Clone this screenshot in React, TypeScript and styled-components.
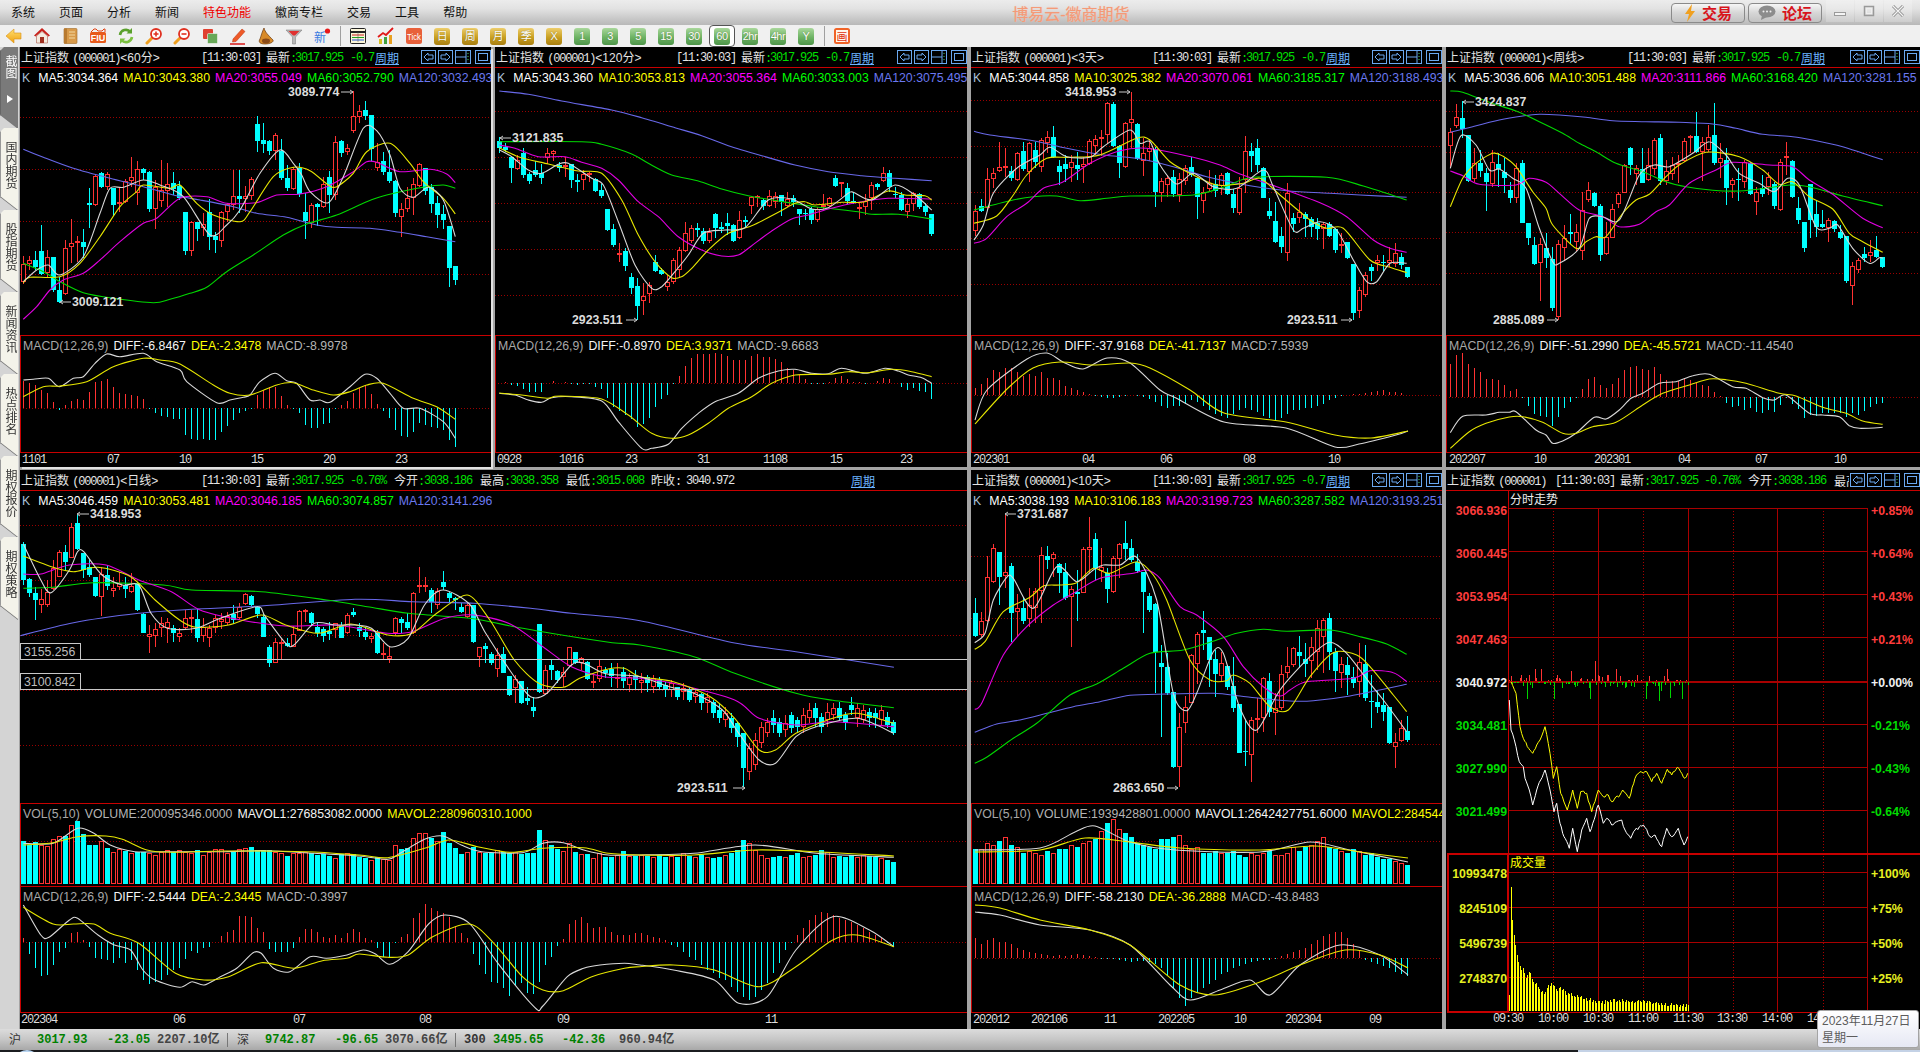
import React from "react";
import styled, { createGlobalStyle } from "styled-components";

/* ---------- chart data ---------- */
type Candle = { x: number; up: boolean; t: number; b: number; wt: number; wb: number };
type Curve = { c: string; d: string };
type Mark = { text: string; y: number; tx: number; ax1: number; ax2: number; head: "l" | "r" };

const C = { blue: "#6868e8", green: "#00d800", mag: "#e000e0", yel: "#e6e600", wht: "#d8d8d8" };
const RED = "#ff3232";
const CY = "#00ffff";
const GRID = "#9a0000";

const parseCandles = (s: string, x0: number, oy: number): Candle[] =>
  s.trim().split(/\s+/).map((tok, k) => {
    const [t, b, wt, wb] = tok.slice(1).split(",").map(Number);
    return { x: Math.round(x0 + 6 * k), up: tok[0] === "R", t: Math.round(oy + t / 3), b: Math.round(oy + b / 3), wt: Math.round(oy + wt / 3), wb: Math.round(oy + wb / 3) };
  });

const pts = (s: string, ox: number, oy: number, sx: number, sy: number) =>
  s.trim().split(/\s+/).map((p) => {
    const [x, y] = p.split(",").map(Number);
    return [ox + x / sx, oy + y / sy] as [number, number];
  });

const smooth = (p: [number, number][]) => {
  let d = `M${p[0][0].toFixed(1)} ${p[0][1].toFixed(1)}`;
  for (let i = 0; i < p.length - 1; i++) {
    const p0 = p[i - 1] || p[i];
    const p1 = p[i];
    const p2 = p[i + 1];
    const p3 = p[i + 2] || p2;
    const k = 0.14;
    d += `C${(p1[0] + (p2[0] - p0[0]) * k).toFixed(1)} ${(p1[1] + (p2[1] - p0[1]) * k).toFixed(1)} ${(p2[0] - (p3[0] - p1[0]) * k).toFixed(1)} ${(p2[1] - (p3[1] - p1[1]) * k).toFixed(1)} ${p2[0].toFixed(1)} ${p2[1].toFixed(1)}`;
  }
  return d;
};

const curves = (arr: [string, string][], ox: number, oy: number, sx = 3, sy = 3): Curve[] =>
  arr.map(([c, s]) => ({ c, d: smooth(pts(s, ox, oy, sx, sy)) }));

const rng = (seed: number) => () => {
  seed |= 0; seed = (seed + 0x6d2b79f5) | 0;
  let t = Math.imul(seed ^ (seed >>> 15), 1 | seed);
  t = (t + Math.imul(t ^ (t >>> 7), 61 | t)) ^ t;
  return ((t ^ (t >>> 14)) >>> 0) / 4294967296;
};

const tips = (s: string, oy: number) => s.trim().split(/\s+/).map((v) => oy + Number(v) / 3);

/* panel 1 */
const c1 = parseCandles(`R492,545,468,552 R481,491,468,510 C480,500,452,510 C453,522,375,525 R472,520,450,530 C471,570,470,575 C570,607,530,610 R445,583,420,585 R430,442,357,490 R424,430,407,485 C426,440,388,475 C310,315,265,385 R228,314,222,318 C218,260,215,265 R221,260,215,270 C265,315,265,347 R307,312,262,335 R242,305,238,310 R230,243,170,260 R208,278,182,315 C207,218,204,240 C216,326,212,335 R262,326,240,388 R270,304,180,320 R252,272,190,320 C250,268,215,285 C258,295,242,300 C336,452,335,465 R366,452,362,467 C366,387,365,422 R373,385,340,408 C335,410,296,450 C408,420,395,458 R336,422,332,440 R313,336,308,366 R287,315,210,330 C288,296,210,340 R287,296,258,335 R237,287,230,300 C72,122,48,155 C120,132,70,160 C124,152,120,165 R105,152,100,180 C152,235,118,240 C234,264,195,272 R207,266,200,270 C205,282,190,290 C336,364,278,416 R315,370,310,384 C313,320,310,378 R253,322,230,325 C232,285,212,338 R127,284,108,300 C122,158,120,170 R143,155,132,165 R48,92,-27,98 R34,52,15,70 C30,48,3,60 C45,148,44,182 R185,205,130,213 C184,215,155,225 C216,243,150,248 C243,338,240,352 R328,352,310,410 R295,328,262,335 R253,295,235,345 R192,257,188,262 C204,272,203,285 C262,312,252,340 C310,344,288,383 C343,360,315,388 C378,503,378,562 C498,540,498,556`, 23.33, 100);
const l1 = curves([
  [C.blue, "70,148 130,172 220,205 330,235 430,260 520,285 600,300 700,320 770,340 860,352 950,375 1010,382 1110,385 1200,397 1280,410 1366,425"],
  [C.green, "70,490 130,515 180,545 250,578 340,595 460,608 510,598 570,580 620,562 680,515 760,465 850,405 920,372 1010,345 1100,305 1160,285 1270,262 1330,255 1366,265"],
  [C.mag, "70,658 110,620 150,570 190,540 250,520 300,480 360,425 430,370 470,355 540,295 620,290 680,310 770,308 830,285 900,282 980,260 1060,215 1100,185 1130,187 1200,215 1290,208 1340,222 1366,248"],
  [C.yel, "70,548 90,532 180,530 240,490 300,410 360,320 410,275 430,255 510,265 540,255 590,310 640,345 720,365 750,335 820,230 880,202 930,212 985,255 1010,260 1060,220 1100,155 1170,130 1230,190 1270,245 1330,295 1366,342"],
  [C.wht, "70,545 110,510 145,495 180,525 250,470 300,340 330,265 370,262 430,240 480,255 550,290 630,405 680,375 720,330 780,220 840,150 880,190 905,225 930,275 985,308 1030,230 1090,85 1130,92 1170,165 1200,265 1240,292 1285,262 1330,300 1366,410"],
], 0, 100);
const h1 = tips("842 848 856 870 880 906 930 915 902 897 900 875 845 842 837 860 880 882 885 887 897 925 940 948 950 957 958 1005 1017 1020 1017 1020 1020 995 978 960 940 933 925 885 870 862 860 888 915 925 940 975 985 985 972 970 928 915 903 878 865 855 882 912 932 955 990 1008 1010 995 970 975 980 985 990 1020 1042", 100);
const m1 = curves([
  [C.wht, "70,840 100,838 145,835 178,860 220,835 250,830 285,790 320,762 360,770 430,760 470,785 540,810 560,845 650,908 690,900 730,892 750,885 780,845 825,820 860,842 890,850 930,900 960,900 990,907 1050,860 1095,823 1130,835 1170,880 1210,925 1260,925 1330,965 1366,1015"],
  [C.yel, "70,890 130,860 180,858 260,845 340,800 430,775 480,780 540,792 640,855 690,880 750,885 830,855 880,848 940,870 1000,885 1050,875 1100,855 1150,850 1240,895 1310,920 1366,958"],
], 0, 100);

/* panel 2 */
const c2 = parseCandles(`C168,188,155,205 C185,196,175,200 C217,248,215,293 R225,252,210,255 C205,270,190,280 C267,288,260,296 C256,270,228,275 C265,278,238,298 R205,218,190,238 R197,207,195,228 C240,250,232,262 R240,246,215,275 C238,285,236,308 C286,290,268,322 R267,285,255,315 R263,270,260,290 C283,318,280,320 C316,332,298,340 C372,436,372,438 C432,480,418,485 R503,506,475,530 C497,543,490,558 C575,608,565,628 C603,663,580,705 R632,648,595,690 R600,628,592,655 C532,557,510,562 C556,567,550,570 R590,605,570,618 R525,592,520,596 R495,555,485,580 R445,497,412,500 R430,468,420,475 C430,434,414,455 C438,467,430,478 R442,468,430,475 C388,428,385,458 C427,432,410,445 C414,423,385,450 C420,468,418,472 R406,460,378,462 C406,412,392,425 R335,362,332,388 R332,338,330,365 C346,362,342,375 R334,362,315,365 R332,352,320,370 C330,352,330,392 R343,362,320,365 C340,350,330,365 C373,387,372,420 C385,388,372,405 C372,404,365,418 R372,404,365,410 R360,367,328,372 R340,362,335,365 C280,303,270,305 R292,298,290,335 C310,348,295,358 C348,352,320,358 R367,373,350,402 R347,365,328,390 R300,340,290,375 C297,305,295,315 R265,287,245,290 C265,305,255,320 C327,331,305,340 C330,375,322,378 R356,380,340,400 R325,358,320,378 C328,366,325,372 C364,380,355,394 C387,446,387,452`, 499.33, 85);
const l2 = curves([
  [C.blue, "13,18 100,28 200,48 350,75 440,98 540,128 620,152 700,182 800,212 900,240 1000,260 1100,272 1200,280 1310,287"],
  [C.green, "13,170 260,170 320,178 410,207 460,235 530,270 610,288 680,312 760,332 850,348 960,365 1090,380 1130,388 1210,388 1310,402"],
  [C.mag, "13,180 60,190 130,215 210,215 260,232 320,250 370,285 430,350 490,395 550,455 620,495 680,513 730,510 770,482 830,438 890,402 940,390 1000,372 1090,352 1180,340 1310,342"],
  [C.yel, "13,188 70,215 160,237 250,258 320,265 380,345 430,450 480,530 530,578 560,575 590,550 640,495 700,445 770,422 850,382 900,355 930,350 960,360 1040,352 1110,350 1180,318 1230,330 1290,332 1310,345"],
  [C.wht, "13,195 50,215 100,255 140,265 190,238 220,235 290,280 325,300 370,410 420,540 470,610 500,605 540,560 580,510 625,445 690,435 750,428 820,345 890,342 950,372 1000,368 1060,325 1075,322 1130,345 1200,300 1260,330 1310,375"],
], 495, 85);
const h2 = tips("893 892 900 902 912 920 920 920 893 888 893 892 895 900 895 895 907 912 940 965 978 990 1003 1025 1018 1000 965 942 930 898 873 843 820 808 808 806 805 808 812 826 824 824 813 808 816 816 822 830 848 855 870 882 895 895 895 890 878 874 882 890 892 897 893 888 880 882 893 905 914 910 918 922 942", 85);
const m2 = curves([
  [C.wht, "13,925 60,930 100,945 140,952 170,938 230,935 320,948 370,1010 440,1090 470,1090 520,1078 560,1030 610,985 660,950 730,925 790,880 850,858 900,853 950,865 1000,866 1040,850 1110,865 1170,850 1210,858 1240,870 1280,878 1310,895"],
  [C.yel, "13,924 80,930 155,940 180,934 220,934 320,942 400,990 470,1045 530,1060 580,1050 640,1015 700,970 770,935 830,895 900,870 1000,868 1060,860 1120,863 1190,853 1250,860 1310,875"],
], 495, 85);

/* panel 3 */
const c3 = parseCandles(`R514,572,495,588 C498,512,478,515 R418,503,385,510 R400,416,385,445 R380,392,305,395 R378,382,325,410 C394,414,378,422 R340,420,335,422 C334,388,305,392 R310,395,305,425 C330,365,305,385 R300,380,295,395 R290,308,272,340 C292,352,258,355 C378,396,360,435 C372,388,345,425 R366,385,345,425 C375,388,335,420 R372,380,350,428 R302,372,298,375 R298,318,285,345 R292,296,270,348 R190,285,185,312 C192,318,186,322 C317,368,315,415 R250,380,245,384 R238,250,155,325 C252,358,250,360 R340,362,295,408 R325,335,298,362 C328,456,322,500 R424,458,415,485 R415,436,405,470 C410,462,390,472 R418,464,400,485 R385,424,375,435 C380,405,350,412 C415,472,412,536 R455,482,440,518 R428,446,390,452 C432,452,405,472 R405,438,400,465 C400,462,395,465 C462,505,448,520 R445,518,412,525 R332,420,288,458 C334,348,308,395 C324,375,298,395 C385,473,380,475 C514,527,475,538 C543,606,485,608 C588,622,560,638 R458,640,430,662 C534,552,520,575 R515,534,488,548 C522,538,515,590 C538,562,530,590 C550,566,535,600 R552,568,545,628 C553,588,545,590 C568,630,565,638 R612,618,580,638 C606,655,605,658 C672,820,672,840 R750,812,740,835 R705,766,695,772 C680,692,672,722 R660,668,645,692 C665,670,645,695 R660,668,622,680 R640,672,610,680 C650,676,640,688 C682,710,680,715`, 974.67, 40);
const l3 = curves([
  [C.blue, "42,274 90,285 220,302 320,325 430,345 530,355 640,380 740,410 870,437 980,452 1110,460 1200,465 1340,472"],
  [C.green, "42,510 150,482 220,470 290,468 360,482 440,475 510,468 700,465 800,438 880,412 1100,412 1210,438 1340,480"],
  [C.mag, "42,610 80,595 140,530 200,490 250,445 310,425 390,370 480,332 560,325 700,352 780,375 840,402 950,440 1080,488 1160,530 1240,600 1290,625 1340,637"],
  [C.yel, "42,550 110,528 160,465 200,405 260,355 330,352 420,345 530,295 570,300 630,365 700,405 770,435 850,430 900,415 960,465 1050,540 1100,565 1150,565 1230,660 1290,682 1340,698"],
  [C.wht, "42,600 70,555 100,460 170,385 240,345 270,322 320,350 390,352 430,320 510,270 540,310 570,305 600,375 650,432 700,400 760,440 830,445 910,390 940,440 1000,570 1030,565 1080,545 1130,570 1180,660 1220,725 1250,725 1290,670 1340,670"],
], 960, 40);
const h3v = [8,12,18,26,24,28,28,24,20,22,20,24,18,18,16,10,8,6,4,2,0,-1,-2,-2,-1,0,1,0,-1,-3,-6,-10,-12,-10,-10,-8,-4,-6,-10,-14,-18,-20,-22,-18,-14,-12,-14,-16,-20,-22,-24,-22,-18,-14,-14,-12,-12,-10,-8,-4,-2,0,1,2,2,3,4,5,6,4,4,3];
const h3 = h3v.map((v) => 395.5 - v);
const m3 = curves([
  [C.wht, "975,420 987,390 1027,359 1047,353 1063,362 1083,369 1107,358 1130,363 1160,390 1176,398 1224,422 1286,428 1335,447 1359,444 1396,435 1408,431"],
  [C.yel, "975,424 1007,389 1033,368 1060,362 1093,365 1130,363 1150,368 1190,390 1224,413 1286,422 1335,435 1371,438 1408,431"],
], 0, 0, 1, 1);

/* panel 4 */
const c4 = parseCandles(`R140,182,130,250 R95,123,58,130 C100,132,48,160 C150,287,150,290 R235,282,190,290 C235,258,195,275 C265,290,250,378 R230,298,195,305 C238,252,205,305 C262,278,220,325 C316,340,290,355 R248,340,235,355 C235,413,225,415 C415,458,415,480 C480,538,455,540 R478,534,460,648 C488,518,445,548 C522,668,485,678 R478,695,465,705 R458,488,420,528 C442,446,388,478 R442,472,418,498 R376,497,320,525 R314,345,290,350 C324,362,322,365 C364,510,358,528 R457,507,410,510 R373,458,358,460 R328,358,320,370 R240,323,238,325 C188,240,185,270 R248,268,240,300 C252,293,190,295 R240,285,188,288 R165,253,160,270 C160,287,148,300 R258,288,225,300 R240,268,215,285 R233,240,210,295 R167,228,160,230 R153,160,150,205 C153,200,80,205 R172,200,155,288 R157,195,120,200 C150,235,55,240 R220,235,175,278 C225,308,188,360 R286,300,280,340 C283,285,250,348 R232,290,225,310 C235,326,232,330 R320,350,305,390 C310,328,270,335 R275,305,262,330 C298,362,290,372 R230,375,222,378 R213,215,172,270 C228,335,225,338 C370,404,335,416 C412,490,410,500 C298,404,296,458 C388,425,345,455 C417,425,375,430 R404,428,400,470 C407,432,405,440 C440,458,420,462 C453,588,453,595 R544,602,530,660 R525,554,520,565 C508,520,485,532 R500,512,465,532 C496,516,453,520 C517,546,517,550`, 1450.33, 85);
const l4 = curves([
  [C.blue, "13,142 80,125 160,105 230,93 280,88 340,90 420,97 500,107 600,110 700,112 800,117 870,130 950,148 1040,155 1100,165 1190,185 1250,205 1310,224"],
  [C.green, "13,18 50,22 130,52 210,78 280,110 350,145 400,175 450,200 510,235 590,260 660,290 720,305 800,316 880,318 960,310 1030,300 1090,305 1190,333 1310,362"],
  [C.mag, "13,258 50,272 100,298 210,300 250,280 300,292 340,325 400,375 470,395 520,425 580,418 630,380 670,360 730,295 810,255 860,232 970,240 1040,245 1090,285 1160,328 1250,400 1310,428"],
  [C.yel, "13,365 50,280 90,235 140,205 170,213 210,245 260,320 300,370 320,420 390,490 420,470 450,455 480,455 530,385 570,345 610,328 660,275 700,240 780,202 880,215 950,255 1000,298 1040,290 1090,335 1160,372 1210,445 1250,470 1310,502"],
  [C.wht, "13,250 45,152 90,180 130,255 160,252 200,280 240,310 280,430 320,530 340,535 400,490 430,400 470,395 520,405 580,270 625,240 670,245 740,205 790,170 840,210 880,265 940,295 985,320 1025,280 1060,300 1110,425 1150,430 1175,420 1220,490 1270,535 1300,518 1310,520"],
], 1446, 85);
const h4 = tips("838 810 805 838 850 862 882 882 886 900 918 912 938 962 988 992 995 1022 995 970 950 938 912 882 876 900 908 896 880 855 846 843 853 855 847 868 885 888 888 878 885 895 900 903 920 934 954 965 962 975 968 980 983 975 980 960 938 958 972 998 990 992 985 985 985 985 995 985 990 978 965 958 955", 85);
const m4 = curves([
  [C.wht, "13,1043 50,994 120,990 160,982 190,982 210,980 270,1035 300,1050 320,1075 350,1068 390,1045 445,997 480,1002 520,975 555,940 590,925 640,895 690,890 740,872 790,868 860,905 900,910 950,938 985,945 1020,930 1090,985 1130,990 1180,995 1210,1022 1240,1030 1310,1027"],
  [C.yel, "13,1090 70,1040 120,1015 190,996 230,995 290,1012 350,1045 390,1045 440,1025 510,1012 590,960 650,925 730,900 790,882 840,884 900,895 1000,925 1050,933 1130,967 1200,985 1250,1008 1310,1018"],
], 1446, 85);

/* big daily panel */
const cB = parseCandles(`C222,330,215,345 C327,370,325,380 C370,390,350,450 R388,404,358,430 R365,404,330,410 R295,358,270,360 R246,320,240,322 C246,277,225,300 R172,263,160,265 C160,237,135,240 C248,300,248,325 C292,315,270,320 C322,378,320,380 R313,380,290,438 C314,348,285,360 R355,362,320,380 R340,350,305,360 C345,357,322,385 R348,365,310,370 C340,420,337,422 C432,488,430,490 R492,500,465,548 R476,497,460,530 R458,474,440,500 R455,475,445,520 C473,488,465,515 R488,502,475,515 R445,475,420,478 R440,445,420,490 C448,503,418,515 R470,497,445,515 R473,505,465,530 R445,473,435,490 R448,455,430,478 R438,458,425,465 C432,450,405,462 R410,445,400,450 R372,403,368,405 C378,405,376,410 C412,432,408,445 C442,500,432,502 C532,578,525,590 R515,578,505,580 R515,523,505,570 C520,528,505,530 R493,530,468,532 R423,482,420,484 R421,427,418,455 C430,460,425,465 C470,490,455,500 C478,498,470,515 C482,492,455,510 R460,480,458,505 C465,503,455,505 R435,490,430,492 C427,435,415,440 C470,483,460,500 C485,500,470,510 R498,507,490,520 C490,550,480,552 R550,556,520,568 R557,568,528,578 R443,490,440,495 C448,458,440,490 C455,475,430,480 R370,490,365,492 R345,352,292,368 R345,350,322,365 C360,395,355,430 R362,405,355,418 C336,350,303,360 C368,385,365,395 C385,390,380,420 C410,425,400,430 R405,440,398,445 C405,515,405,518 R532,562,530,592 C528,538,518,580 C552,578,545,585 R555,598,535,622 C552,608,530,610 C618,674,618,678 R628,655,615,700 C634,698,632,702 C684,692,650,705 C711,722,682,740 C462,665,462,670 R600,672,585,675 C585,600,570,630 C603,630,600,640 R606,620,590,650 R532,588,530,592 C546,578,545,582 R565,578,560,600 C575,627,572,630 R632,635,610,655 R588,628,570,635 C600,610,590,625 C598,618,580,650 R620,625,580,655 C605,632,590,655 R620,645,610,665 C618,630,600,660 R630,640,610,670 C622,640,615,665 R625,650,615,670 C630,650,620,660 C645,660,635,680 R640,660,630,680 C650,680,650,690 R655,665,640,690 C660,690,650,695 R665,680,655,700 C672,700,668,720 R680,700,670,730 C695,730,690,745 C720,745,700,760 R730,750,710,770 C745,775,730,790 C760,800,755,830 C790,895,790,952 R835,905,820,930 R810,885,790,900 R770,820,755,835 R755,790,745,800 C745,765,720,790 C755,790,745,800 R760,780,735,800 C735,775,725,790 C750,770,740,790 R735,770,715,790 R720,745,700,760 C715,745,700,770 C740,770,730,790 R725,750,700,770 R715,735,700,750 C715,745,695,750 C735,760,725,780 C705,720,680,735 R715,745,700,770 R720,750,705,760 C725,745,715,770 C730,745,715,775 R720,750,705,765 C740,765,725,775 C755,790,750,795`, 23.3, 470);
const lB = curves([
  [C.blue, "50,497 180,458 340,430 470,418 640,408 870,388 1010,395 1160,400 1300,415 1400,430 1568,452 1800,519 1950,545 2190,592"],
  [C.green, "57,355 130,352 230,338 400,345 470,360 640,365 800,390 900,410 1000,430 1150,445 1260,470 1350,490 1500,518 1568,525 1700,560 1800,610 1950,670 2040,691 2190,713"],
  [C.mag, "57,312 100,312 170,285 260,285 340,330 420,365 490,420 590,450 700,468 820,465 900,480 950,490 1010,485 1090,445 1160,435 1250,462 1330,530 1400,590 1480,620 1568,625 1650,640 1800,690 1860,745 1950,765 2040,755 2190,770"],
  [C.yel, "57,258 130,292 180,305 240,292 320,320 380,390 440,450 480,472 560,465 640,435 700,465 780,490 860,462 950,495 1010,490 1070,430 1145,375 1200,450 1260,570 1320,640 1380,652 1420,625 1490,597 1530,595 1568,620 1650,635 1740,680 1800,745 1860,840 1900,840 1950,790 2040,745 2100,730 2190,760"],
  [C.wht, "57,222 100,330 125,368 170,300 190,245 205,245 250,315 300,345 340,345 370,430 410,475 480,475 540,445 630,410 650,440 700,520 720,525 770,460 820,465 870,465 910,475 955,530 1000,505 1040,405 1085,360 1150,402 1190,490 1260,620 1300,680 1340,670 1400,585 1430,580 1480,610 1520,615 1568,620 1640,650 1700,670 1770,720 1810,790 1860,870 1900,880 1950,800 2000,770 2100,745 2190,790"],
], 0, 470, 2.45, 3);
const vB = tips("122 135 127 135 138 118 108 108 75 63 102 135 135 122 143 155 148 153 158 157 157 158 164 155 150 155 150 156 158 150 164 155 148 147 158 152 148 145 140 150 150 150 155 158 167 160 160 155 158 165 163 168 175 162 160 163 170 175 180 172 178 180 135 146 145 115 100 100 115 122 96 130 145 162 155 142 155 158 158 150 155 158 155 162 158 158 90 120 135 148 152 130 155 162 162 175 160 172 170 165 153 168 168 165 168 172 165 170 168 172 160 168 170 165 172 175 170 165 160 150 120 130 150 165 175 172 168 170 165 160 170 168 165 150 155 170 168 172 165 170 165 168 172 175 180 186", 800);
const volB = curves([
  [C.wht, "57,130 130,130 190,85 230,100 270,135 330,155 400,155 550,155 650,152 770,160 880,168 950,178 980,160 1040,118 1085,108 1130,135 1180,155 1280,158 1330,130 1380,128 1430,150 1490,165 1568,165 1700,160 1850,135 2000,160 2190,172"],
  [C.yel, "57,135 130,128 190,110 260,108 300,118 360,150 420,157 550,153 750,155 880,165 950,173 1040,145 1100,120 1170,140 1250,157 1330,145 1430,143 1490,160 1568,165 1700,165 1850,150 2000,155 2190,168"],
], 0, 800, 2.45, 3);
const hB = tips("415 462 505 527 525 495 455 445 398 397 420 440 475 478 480 490 475 488 480 510 540 553 545 540 525 510 503 478 452 458 445 440 425 407 395 390 347 347 350 385 395 448 455 455 457 443 410 387 387 395 410 415 405 415 398 387 397 413 420 445 470 470 427 410 402 355 338 312 325 332 340 350 378 400 415 462 495 522 545 550 565 587 555 550 580 582 545 495 470 437 418 373 360 350 370 385 380 380 395 405 405 405 400 400 405 410 415 420 435 440 455 470 480 495 510 520 535 540 560 575 590 600 590 570 550 520 490 450 430 405 385 360 345 335 340 345 355 360 365 375 385 395 405 415 430 440", 800);
const mB = curves([
  [C.wht, "57,315 100,405 120,412 170,360 190,355 240,405 280,435 320,450 350,510 380,540 440,562 470,545 500,555 540,530 580,505 620,458 640,460 670,505 710,515 760,470 800,475 850,465 890,450 920,462 955,493 1000,455 1050,372 1090,345 1150,370 1220,490 1310,622 1330,618 1390,530 1430,505 1470,495 1530,490 1568,495 1650,510 1750,540 1810,610 1880,590 1950,450 2040,350 2130,390 2190,440"],
  [C.yel, "57,322 130,372 180,372 230,372 270,400 340,430 430,520 500,540 560,530 640,488 720,505 790,482 850,475 880,462 950,472 1000,465 1060,410 1150,372 1210,430 1280,530 1330,570 1380,572 1450,530 1530,505 1568,500 1650,495 1750,510 1860,560 1950,500 2040,420 2100,405 2190,440"],
], 0, 800, 2.45, 3);

/* panel 5 */
const c5 = parseCandles(`C460,528,415,530 R482,525,455,530 R352,482,288,485 R265,365,252,368 C276,352,275,435 R335,347,165,385 C318,458,310,545 R443,455,402,530 C445,484,412,492 R435,478,385,500 R392,445,385,490 R286,392,262,490 C288,300,258,328 R283,298,275,350 C313,338,310,400 C335,414,310,420 R388,412,378,560 C395,403,330,482 R268,400,262,400 R262,270,170,340 C237,325,220,360 R322,332,265,365 C340,388,325,430 R295,396,288,398 R253,296,250,355 C250,266,183,300 C265,300,238,305 C305,332,282,340 C335,395,335,518 C408,450,400,455 C432,575,430,700 C608,620,555,832 C620,700,580,705 C695,922,695,925 R800,920,760,982 R740,790,708,820 R585,728,583,730 R522,613,515,672 C510,518,452,570 C532,600,532,680 C596,642,570,710 R610,648,575,665 C618,680,615,690 C678,745,590,755 C733,878,733,880 C873,875,780,918 R780,885,770,965 R775,778,715,820 R655,775,652,815 C663,755,640,770 R745,760,700,825 R642,745,615,750 R618,640,560,655 R565,615,560,620 C576,587,528,625 C598,612,550,650 R560,603,530,655 R505,575,480,630 R480,530,475,640 C474,575,460,630 C575,634,565,695 R612,638,590,685 C615,645,590,705 C650,668,620,685 R607,665,548,712 C612,714,555,722 C723,725,645,805 C727,740,690,760 C736,755,700,782 C742,850,742,852 R845,860,818,925 R805,842,780,845 C814,840,768,845`, 974.67, 460);
const l5 = curves([
  [C.blue, "44,817 110,792 180,780 260,760 340,740 420,725 510,706 620,702 760,700 840,708 900,715 990,723 1060,722 1170,708 1340,673"],
  [C.green, "44,910 80,892 160,835 230,790 330,705 410,672 490,625 570,580 670,570 770,540 830,520 910,508 980,514 1110,510 1200,530 1280,552 1340,583"],
  [C.mag, "44,748 65,730 130,585 200,500 280,435 340,400 420,355 520,340 560,330 600,355 660,440 710,465 790,530 850,620 910,680 960,708 990,690 1040,665 1180,655 1230,632 1300,638 1340,665"],
  [C.yel, "44,568 75,545 130,455 210,412 250,378 300,375 350,368 400,325 450,340 530,305 580,345 620,420 690,600 750,660 800,662 820,645 870,670 930,740 985,750 1050,650 1120,578 1190,585 1230,620 1300,705 1340,755"],
  [C.wht, "44,548 75,520 100,420 140,352 160,355 220,445 290,320 350,365 400,330 430,315 480,315 530,292 590,420 640,700 680,752 710,700 760,575 790,580 840,745 890,810 960,690 1050,590 1110,547 1160,580 1230,670 1270,720 1340,815"],
], 960, 460);
const v5 = [34,34,40,38,42,46,38,36,30,32,30,28,32,30,34,34,38,36,40,42,44,52,60,64,54,50,46,40,38,36,34,44,44,46,48,38,34,36,30,30,32,30,30,32,28,26,30,28,30,32,28,28,30,36,32,36,38,42,46,36,34,32,30,34,32,28,30,26,24,24,22,20,18].map((h) => 883 - h);
const vol5 = curves([
  [C.wht, "975,850 1040,848 1075,832 1095,826 1130,842 1175,850 1260,852 1310,842 1350,850 1408,862"],
  [C.yel, "975,852 1040,850 1085,838 1130,842 1180,848 1260,850 1315,846 1360,852 1408,858"],
], 0, 0, 1, 1);
const h5v = [20,14,18,20,16,16,14,10,8,6,5,4,3,2,3,2,3,4,3,2,1,0,-1,-1,-2,-3,-4,-3,-3,-4,-6,-10,-18,-30,-40,-48,-40,-34,-30,-26,-22,-16,-14,-10,-8,-6,-4,-3,-2,-2,-1,2,4,6,8,10,14,18,22,24,26,26,20,14,8,-2,-4,-6,-8,-10,-14,-16,-18];
const h5 = h5v.map((v) => 958 - v);
const m5 = curves([
  [C.wht, "975,912 1000,915 1040,925 1090,930 1130,945 1170,985 1190,1000 1220,990 1250,980 1270,995 1300,965 1340,945 1380,955 1408,975"],
  [C.yel, "975,905 1000,908 1040,920 1090,930 1130,945 1180,985 1215,995 1260,982 1300,965 1345,950 1380,955 1408,968"],
], 0, 0, 1, 1);

/* time-share panel */
const jag = (s: string, ox: number, oy: number, seed: number) => {
  const base = pts(s, ox, oy, 3, 3);
  const r = rng(seed);
  const out: [number, number][] = [];
  for (let i = 0; i < base.length - 1; i++) {
    const [a, b] = [base[i], base[i + 1]];
    const n = Math.max(1, Math.round((b[0] - a[0]) / 1.5));
    for (let j = 0; j < n; j++) {
      const f = j / n;
      out.push([a[0] + (b[0] - a[0]) * f, a[1] + (b[1] - a[1]) * f + (j ? (r() - 0.5) * 3 : 0)]);
    }
  }
  out.push(base[base.length - 1]);
  return out.map((p, i) => `${i ? "L" : "M"}${p[0].toFixed(1)} ${p[1].toFixed(1)}`).join("");
};
const tWhite = jag("208,720 213,810 228,860 238,905 250,920 255,955 268,990 278,1035 290,990 302,960 315,930 330,990 342,1055 350,1030 360,1090 372,1130 388,1165 398,1105 412,1175 425,1110 440,1075 450,1115 475,1035 490,1090 500,1075 515,1095 530,1085 545,1080 555,1110 572,1135 585,1110 610,1095 630,1130 645,1125 665,1160 680,1105 695,1130 715,1105 732,1155 743,1130", 1440, 460, 7);
const tYellow = jag("213,665 228,700 240,800 250,835 262,860 278,880 290,855 300,840 315,800 330,880 340,955 350,920 362,1000 382,1050 398,990 412,1045 422,995 440,1000 455,1055 475,990 490,1010 505,1005 515,1025 540,1005 548,990 568,1015 585,955 600,935 620,935 635,965 650,940 665,970 682,928 695,945 712,922 735,955 743,940", 1440, 460, 11);

const flow = (() => {
  const r = rng(21);
  const fixed: Record<number, number> = { 51: 625 - 662, 64: 625 - 662, 124: 632 - 662, 170: 603 - 662, 213: 625 - 662, 274: 612 - 662, 314: 625 - 662, 37: 712 - 662, 89: 712 - 662, 163: 713 - 662, 273: 713 - 662, 301: 718 - 662, 321: 710 - 662, 345: 712 - 662 };
  const res: { x: number; d: number }[] = [];
  for (let i = 0; i < 120; i++) {
    const id = Object.keys(fixed).find((k) => Math.round(Number(k) / 3) === i);
    const v = id ? fixed[Number(id)] : (r() < 0.5 ? -1 : 1) * r() * r() * (i < 50 ? 34 : 30);
    res.push({ x: 1509 + i * 1.5, d: v / 3 });
  }
  return res;
})();

const volEnv = pts("208,393 212,105 216,240 222,300 232,350 240,380 250,385 258,410 265,383 275,410 285,425 295,440 310,455 330,425 345,440 365,440 380,455 410,460 430,470 470,480 550,475 620,480 700,490 745,490", 1440, 840, 3, 3);
const tVol = (() => {
  const r = rng(5);
  const res: { x: number; y: number }[] = [];
  for (let x = 1509; x <= 1688; x += 1.5) {
    let k = 0;
    while (k < volEnv.length - 2 && volEnv[k + 1][0] < x) k++;
    const [a, b] = [volEnv[k], volEnv[k + 1]];
    const f = Math.min(1, (x - a[0]) / (b[0] - a[0]));
    res.push({ x, y: a[1] + (b[1] - a[1]) * f + (x > 1515 ? r() * 4 : 0) });
  }
  return res;
})();

/* ---------- styled parts ---------- */
const FONT = `"Liberation Sans", "Noto Sans CJK SC", sans-serif`;
const MONO = `"Liberation Mono", "Noto Sans CJK SC", monospace`;

const Global = createGlobalStyle`
  html, body { margin: 0; padding: 0; background: #d4d4d4; overflow: hidden; }
  body { font-family: ${FONT}; font-size: 12px; }
  * { box-sizing: border-box; }
`;

const Screen = styled.div`
  position: relative; width: 1920px; height: 1052px; overflow: hidden;
  display: flex; flex-direction: column; background: #d4d4d4;
`;

const MenuBar = styled.div`
  height: 25px; flex: none; display: flex; align-items: center; padding-left: 11px;
  background: linear-gradient(#ececec, #e2e2e2 35%, #b8b8b8);
`;
const MenuItem = styled.span<{ $hot?: boolean }>`
  margin-right: 24px; color: ${(p) => (p.$hot ? "#f00000" : "#111")}; font-size: 12px; line-height: 14px; white-space: nowrap;
`;
const BrandTitle = styled.span`
  margin-left: 521px; font-size: 16px; color: #f49a78; white-space: nowrap; text-shadow: 0 0 1px #f7b9a0;
`;
const RightCluster = styled.div`
  margin-left: auto; display: flex; align-items: center; height: 100%; padding-right: 8px;
`;
const TopBtn = styled.div`
  width: 74px; height: 20px; margin-right: 3px; border: 1px solid #8a8a8a; border-radius: 4px;
  background: linear-gradient(#f6f6f6, #d6d6d6 50%, #c2c2c2);
  display: flex; align-items: center; justify-content: center; gap: 6px;
  font-size: 15px; font-weight: 700; color: #d8141c; white-space: nowrap;
`;
const WinBtn = styled.div`
  width: 28px; height: 22px; margin-left: 1px; display: flex; align-items: center; justify-content: center; align-self: flex-start;
  background: rgba(255,255,255,.22);
`;

const ToolBar = styled.div`
  height: 22px; flex: none; display: flex; align-items: center; background: #f0f0f0;
`;
const ToolSlot = styled.div<{ $sel?: boolean }>`
  width: 28px; height: 22px; flex: none; display: flex; align-items: center; justify-content: center;
  ${(p) => p.$sel && "background:#fff; border:1px solid #555; border-radius:4px; margin:0 1px; width:26px;"}
`;
const ToolSep = styled.div`
  width: 8px; height: 20px; flex: none; display: flex; justify-content: center;
  &::after { content: ""; width: 1px; height: 100%; background: #a0a0a0; }
`;
const PeriodBtn = styled.div<{ $gold?: boolean }>`
  width: 16px; height: 17px; border-radius: 3px; display: flex; align-items: center; justify-content: center;
  background: ${(p) => (p.$gold ? "linear-gradient(#edcd6c,#c9a021 55%,#a87e10)" : "linear-gradient(#a9d79b,#6db364 55%,#4d9448)")};
  color: #fff; font-size: 11px; line-height: 11px; letter-spacing: -0.4px; text-shadow: 0 0 1px rgba(60,60,0,.6); white-space: nowrap;
`;

const Workspace = styled.div`
  flex: none; height: 982px; display: flex;
`;
const SideTabs = styled.div`
  width: 19px; flex: none; display: flex; flex-direction: column; filter: drop-shadow(0 1px 0 #777);
`;
const SideTab = styled.div<{ $h: number; $sel?: boolean }>`
  width: 18px; height: ${(p) => p.$h}px; flex: none; display: flex; flex-direction: column; align-items: center;
  padding-top: ${(p) => (p.$sel ? 8 : 13)}px; gap: 14px;
  clip-path: polygon(0 4px, 4px 0, 100% 0, 100% 100%, 0 calc(100% - 14px));
  background: ${(p) => (p.$sel ? "#7a7a7a" : "#f4f3ea")};
  color: ${(p) => (p.$sel ? "#fff" : "#333")};
  border-left: 1px solid ${(p) => (p.$sel ? "#666" : "#999")};
`;
const TabText = styled.span`
  writing-mode: vertical-rl; text-orientation: upright; font-size: 12px; line-height: 13px; letter-spacing: 0.3px;
`;

const ChartGrid = styled.div`
  flex: 1; display: grid; padding-left: 1px; column-gap: 4px; row-gap: 3px;
  grid-template-columns: 471px 472px 471px 474px; grid-template-rows: 420px 559px;
  background: #a4a4a4;
`;
const Panel = styled.section<{ $span?: number; $active?: boolean }>`
  position: relative; background: #000; overflow: hidden; display: flex; flex-direction: column; min-width: 0;
  ${(p) => p.$span && `grid-column: span ${p.$span};`}
  ${(p) => p.$active && "box-shadow: 2px 2px 0 #e2e2e2;"}
`;
const PanelHead = styled.header`
  position: relative; height: 21px; flex: none; display: flex; align-items: center; padding-left: 1px;
  border-bottom: 1px solid #c80000; color: #e4e4e4; white-space: nowrap;
`;
const Seg = styled.span<{ $w: number; $c?: string }>`
  flex: none; width: ${(p) => p.$w}px; color: ${(p) => p.$c || "#e4e4e4"}; font-size: 12px; overflow: visible; white-space: nowrap;
`;
const MonoTxt = styled.span<{ $c?: string }>`
  font-family: ${MONO}; font-size: 12px; letter-spacing: -1.2px; color: ${(p) => p.$c || "inherit"};
`;
const PeriodLink = styled.a`
  flex: none; width: 24px; color: #6cb4ff; text-decoration: underline; font-size: 12px;
`;
const HeadBtns = styled.div`
  position: absolute; right: 0; top: 3px; height: 14px; display: flex; gap: 2px; background: #000; padding-left: 1px;
`;
const HeadBtn = styled.svg<{ $gapL?: boolean }>`
  display: block; ${(p) => p.$gapL && "margin-left:2px;"}
`;

const MainPane = styled.div<{ $h: number }>`
  position: relative; flex: none; height: ${(p) => p.$h}px; overflow: hidden;
`;
const SubPane = styled.div<{ $h: number }>`
  position: relative; flex: none; height: ${(p) => p.$h}px; overflow: hidden;
  border-top: 1px solid #c80000; border-left: 1px solid #c80000;
`;
const Layer = styled.svg`
  position: absolute; left: 0; top: 0; width: 100%; height: 100%; display: block;
`;
const Legend = styled.div<{ $gap: number }>`
  position: relative; z-index: 1; height: 20px; display: flex; align-items: center; gap: ${(p) => p.$gap}px; padding-left: 2px;
  white-space: nowrap; font-size: 12.3px; overflow: hidden;
`;
const LegendItem = styled.span<{ $c: string }>`
  flex: none; color: ${(p) => p.$c};
  &:last-child { flex: 0 1 auto; min-width: 0; overflow: hidden; }
`;
const KTag = styled(LegendItem)`
  margin-right: 3px;
`;
const AxisRow = styled.div`
  position: relative; flex: 1; border-top: 1px solid #c80000; color: #ddd;
`;
const AxisTick = styled.span<{ $x: number }>`
  position: absolute; left: ${(p) => p.$x}px; top: 0; line-height: 14px; font-family: ${MONO}; font-size: 12px; letter-spacing: -1.2px; white-space: nowrap;
`;
const MarkText = styled.text`
  font-family: ${FONT}; font-size: 12.3px; font-weight: 700; fill: #dcdcdc;
`;
const BoxText = styled.text`
  font-family: ${FONT}; font-size: 12.3px; fill: #bdbdbd;
`;

const TimeSection = styled.div<{ $h: number }>`
  position: relative; z-index: 1; height: ${(p) => p.$h}px; flex: none; display: grid;
  grid-template-columns: 61px 1fr 49px; padding-top: 0;
`;
const TimeAxis = styled.div<{ $left?: boolean; $pitch: number }>`
  display: flex; flex-direction: column; padding-top: 13px; text-align: ${(p) => (p.$left ? "right" : "left")};
  font-size: 12.3px; font-weight: 700; line-height: 14px; white-space: nowrap;
  & > span { height: ${(p) => p.$pitch}px; flex: none; }
`;
const AxisValue = styled.span<{ $c: string }>`
  color: ${(p) => p.$c};
`;
const PlotTitle = styled.span<{ $c: string }>`
  color: ${(p) => p.$c}; font-size: 12px; line-height: 18px; padding-left: 3px; align-self: start; height: 18px;
`;
const TimeTicks = styled.div`
  position: relative; z-index: 1; flex: 1; color: #ddd;
`;

const StatusBar = styled.div`
  height: 21px; flex: none; display: flex; align-items: center; padding-left: 9px; white-space: nowrap;
  background: linear-gradient(#dcdcdc, #c6c6c6 50%, #a8a8a8);
`;
const StatusCell = styled.span<{ $w: number; $c: string }>`
  flex: none; width: ${(p) => p.$w}px; height: 14px; line-height: 14px; color: ${(p) => p.$c}; font-family: ${MONO}; font-size: 12px; font-weight: 700;
`;
const StatusCjk = styled.span<{ $w: number }>`
  flex: none; width: ${(p) => p.$w}px; height: 14px; line-height: 14px; color: #333; font-size: 12px;
`;
const StatusSep = styled.span<{ $w: number }>`
  flex: none; width: ${(p) => p.$w}px; height: 14px; display: flex;
  &::before { content: ""; width: 1px; height: 100%; background: #777; }
`;
const TaskSliver = styled.div`
  flex: 1; position: relative; overflow: hidden;
  background: linear-gradient(90deg, #1b1d20 0, #1b1d20 1578px, #c4d2e6 1578px, #c4d2e6 100%);
  &::before { content: ""; position: absolute; left: 14px; top: 0; width: 26px; height: 26px; border-radius: 50%; background: #b8d4f0; }
`;
const DateTip = styled.div`
  position: absolute; left: 1817px; top: 1010px; width: 102px; height: 38px; z-index: 3; padding: 2px 4px;
  background: linear-gradient(#ffffff, #e6e8f4); border: 1px solid #a4a4a4; border-radius: 3px; color: #5c5c5c;
  font-size: 12px; line-height: 17px; white-space: nowrap;
`;

/* ---------- chart drawing ---------- */
const Candles = ({ data }: { data: Candle[] }) => (
  <g shapeRendering="crispEdges">
    {data.map((c, i) =>
      c.up ? (
        <g key={i}>
          <rect x={c.x} y={c.wt} width={1} height={Math.max(0, c.t - c.wt)} fill={RED} />
          <rect x={c.x} y={c.b} width={1} height={Math.max(0, c.wb - c.b)} fill={RED} />
          <rect x={c.x - 1.5} y={c.t + 0.5} width={4} height={Math.max(1, c.b - c.t - 1)} fill="#000" stroke={RED} />
        </g>
      ) : (
        <g key={i} fill={CY}>
          <rect x={c.x} y={c.wt} width={1} height={Math.max(1, c.wb - c.wt)} />
          <rect x={c.x - 2} y={c.t} width={5} height={Math.max(1, c.b - c.t)} />
        </g>
      )
    )}
  </g>
);
const Grid = ({ ys, x, w }: { ys: number[]; x: number; w: number }) => (
  <g shapeRendering="crispEdges">
    {ys.map((y) => <line key={y} x1={x} x2={x + w} y1={Math.round(y) + 0.5} y2={Math.round(y) + 0.5} stroke={GRID} strokeDasharray="1 2" />)}
  </g>
);
const Lines = ({ data, w = 1.1 }: { data: Curve[]; w?: number }) => (
  <g fill="none">{data.map((l, i) => <path key={i} d={l.d} stroke={l.c} strokeWidth={w} />)}</g>
);
const Marker = ({ m }: { m: Mark }) => (
  <g>
    <MarkText x={m.tx} y={m.y + 4}>{m.text}</MarkText>
    <path
      d={m.head === "r"
        ? `M${m.ax1} ${m.y}H${m.ax2}M${m.ax2 - 3} ${m.y - 2}L${m.ax2} ${m.y}L${m.ax2 - 3} ${m.y + 2}`
        : `M${m.ax2} ${m.y}H${m.ax1}M${m.ax1 + 3} ${m.y - 2}L${m.ax1} ${m.y}L${m.ax1 + 3} ${m.y + 2}`}
      stroke="#c8c8c8" strokeWidth={1} fill="none"
    />
  </g>
);
const Hist = ({ data, candles, zero }: { data: number[]; candles: Candle[]; zero: number }) => (
  <g shapeRendering="crispEdges">
    {data.map((y, i) => {
      const c = candles[i];
      if (!c) return null;
      return <rect key={i} x={c.x} width={1} y={Math.min(y, zero)} height={Math.max(0.5, Math.abs(y - zero))} fill={y < zero ? RED : CY} />;
    })}
  </g>
);
const VolBars = ({ data, candles, base }: { data: number[]; candles: Candle[]; base: number }) => (
  <g shapeRendering="crispEdges">
    {data.map((y, i) => {
      const c = candles[i];
      if (!c) return null;
      return c.up ? (
        <rect key={i} x={c.x - 1.5} y={Math.round(y) + 0.5} width={4} height={base - Math.round(y)} fill="#000" stroke={RED} />
      ) : (
        <rect key={i} x={c.x - 2} y={Math.round(y)} width={5} height={base - Math.round(y) + 1} fill={CY} />
      );
    })}
  </g>
);

/* ---------- header bits ---------- */
const HeaderButtons = () => (
  <HeadBtns>
    <HeadBtn width="15" height="14" viewBox="0 0 15 14" fill="none" stroke="#6aa8f0">
      <rect x=".5" y=".5" width="14" height="13" />
      <path d="M3 7l4-4v2h5v4H7v2z" />
    </HeadBtn>
    <HeadBtn width="15" height="14" viewBox="0 0 15 14" fill="none" stroke="#6aa8f0">
      <rect x=".5" y=".5" width="14" height="13" />
      <path d="M12 7L8 3v2H3v4h5v2z" />
    </HeadBtn>
    <HeadBtn width="16" height="14" viewBox="0 0 16 14" fill="none" stroke="#6aa8f0">
      <rect x=".5" y=".5" width="15" height="13" />
      <path d="M1 7h10M11 1v12" />
      <path d="M13 3v1M13 6v1M13 9v1" stroke="#3fd060" />
    </HeadBtn>
    <HeadBtn $gapL width="16" height="14" viewBox="0 0 16 14" fill="none" stroke="#6aa8f0">
      <rect x=".5" y=".5" width="15" height="13" />
      <rect x="3.5" y="3.5" width="9" height="7" />
    </HeadBtn>
  </HeadBtns>
);

const NameSeg = ({ suffix, w }: { suffix: string; w: number }) => (
  <Seg $w={w}>
    上证指数 <MonoTxt>(000001)</MonoTxt>{suffix}
  </Seg>
);

const TimeSeg = () => <Seg $w={65}><MonoTxt>[11:30:03]</MonoTxt></Seg>;
const G = "#00e000";

const StdHeader = ({ suffix }: { suffix: string }) => (
  <PanelHead>
    <NameSeg suffix={suffix} w={180} />
    <TimeSeg />
    <Seg $w={29}>最新<MonoTxt $c={G}>:</MonoTxt></Seg>
    <Seg $w={55}><MonoTxt $c={G}>3017.925</MonoTxt></Seg>
    <Seg $w={25}><MonoTxt $c={G}>-0.7</MonoTxt></Seg>
    <PeriodLink>周期</PeriodLink>
    <HeaderButtons />
  </PanelHead>
);

/* ---------- legends ---------- */
const MaLegend = ({ v }: { v: string[] }) => (
  <Legend $gap={5}>
    <KTag $c="#a9c0d8">K</KTag>
    <LegendItem $c="#fff">MA5:{v[0]}</LegendItem>
    <LegendItem $c="#ffff00">MA10:{v[1]}</LegendItem>
    <LegendItem $c="#ff00ff">MA20:{v[2]}</LegendItem>
    <LegendItem $c="#00ff00">MA60:{v[3]}</LegendItem>
    <LegendItem $c="#6a78f0">MA120:{v[4]}</LegendItem>
  </Legend>
);
const MacdLegend = ({ v }: { v: string[] }) => (
  <Legend $gap={5}>
    <LegendItem $c="#a8a8a8">MACD(12,26,9)</LegendItem>
    <LegendItem $c="#f4f4f4">DIFF:{v[0]}</LegendItem>
    <LegendItem $c="#ffff00">DEA:{v[1]}</LegendItem>
    <LegendItem $c="#b4b4b4">MACD:{v[2]}</LegendItem>
  </Legend>
);
const VolLegend = ({ v }: { v: string[] }) => (
  <Legend $gap={5}>
    <LegendItem $c="#a8a8a8">VOL(5,10)</LegendItem>
    <LegendItem $c="#b4b4b4">VOLUME:{v[0]}</LegendItem>
    <LegendItem $c="#f4f4f4">MAVOL1:{v[1]}</LegendItem>
    <LegendItem $c="#ffff00">MAVOL2:{v[2]}</LegendItem>
  </Legend>
);

/* ---------- chart panels ---------- */
type Spec = {
  suffix: string; x: number; w: number; candles: Candle[]; lines: Curve[]; grid: number[]; marks: Mark[];
  ma: string[]; macd: string[]; hist: number[]; zero: number; mlines: Curve[]; ticks: [string, number][]; active?: boolean;
};
const SmallPanel = ({ s }: { s: Spec }) => (
  <Panel $active={s.active}>
    <StdHeader suffix={s.suffix} />
    <MainPane $h={267}>
      <Layer viewBox={`${s.x} 68 ${s.w} 267`} preserveAspectRatio="none">
        <Grid ys={s.grid} x={s.x} w={s.w} />
        <Candles data={s.candles} />
        <Lines data={s.lines} />
        {s.marks.map((m) => <Marker key={m.text} m={m} />)}
      </Layer>
      <MaLegend v={s.ma} />
    </MainPane>
    <SubPane $h={117}>
      <Layer viewBox={`${s.x + 1} 336 ${s.w - 1} 116`} preserveAspectRatio="none">
        <Grid ys={[s.zero]} x={s.x} w={s.w} />
        <Hist data={s.hist} candles={s.candles} zero={s.zero} />
        <Lines data={s.mlines} />
      </Layer>
      <MacdLegend v={s.macd} />
    </SubPane>
    <AxisRow>
      {s.ticks.map(([t, x]) => <AxisTick key={t + x} $x={x - s.x}>{t}</AxisTick>)}
    </AxisRow>
  </Panel>
);

const P1: Spec = {
  active: true,
  suffix: "<60分>", x: 20, w: 471, candles: c1, lines: l1, grid: [117, 169, 221, 274],
  marks: [
    { text: "3009.121", y: 302, tx: 72, ax1: 60, ax2: 71, head: "l" },
    { text: "3089.774", y: 92, tx: 288, ax1: 341, ax2: 353, head: "r" },
  ],
  ma: ["3034.364", "3043.380", "3055.049", "3052.790", "3032.493"], macd: ["-6.8467", "-2.3478", "-8.9978"],
  hist: h1, zero: 408, mlines: m1,
  ticks: [["1101", 22], ["07", 107], ["10", 179], ["15", 251], ["20", 323], ["23", 395]],
};
const P2: Spec = {
  suffix: "<120分>", x: 495, w: 472, candles: c2, lines: l2, grid: [111, 157, 203, 249, 295],
  marks: [
    { text: "3121.835", y: 138, tx: 512, ax1: 500, ax2: 511, head: "l" },
    { text: "2923.511", y: 320, tx: 572, ax1: 626, ax2: 637, head: "r" },
  ],
  ma: ["3043.360", "3053.813", "3055.364", "3033.003", "3075.495"], macd: ["-0.8970", "3.9371", "-9.6683"],
  hist: h2, zero: 383, mlines: m2,
  ticks: [["0928", 497], ["1016", 559], ["23", 625], ["31", 697], ["1108", 763], ["15", 830], ["23", 900]],
};
const P3: Spec = {
  suffix: "<3天>", x: 971, w: 471, candles: c3, lines: l3, grid: [100, 146, 192, 238, 284],
  marks: [
    { text: "3418.953", y: 92, tx: 1065, ax1: 1119, ax2: 1130, head: "r" },
    { text: "2923.511", y: 320, tx: 1287, ax1: 1341, ax2: 1352, head: "r" },
  ],
  ma: ["3044.858", "3025.382", "3070.061", "3185.317", "3188.493"], macd: ["-37.9168", "-41.7137", "7.5939"],
  hist: h3, zero: 395, mlines: m3,
  ticks: [["202301", 973], ["04", 1082], ["06", 1160], ["08", 1243], ["10", 1328]],
};
const P4: Spec = {
  suffix: "<周线>", x: 1446, w: 474, candles: c4, lines: l4, grid: [111, 152, 192, 232, 273],
  marks: [
    { text: "3424.837", y: 102, tx: 1475, ax1: 1463, ax2: 1474, head: "l" },
    { text: "2885.089", y: 320, tx: 1493, ax1: 1547, ax2: 1558, head: "r" },
  ],
  ma: ["3036.606", "3051.488", "3111.866", "3168.420", "3281.155"], macd: ["-51.2990", "-45.5721", "-11.4540"],
  hist: h4, zero: 397, mlines: m4,
  ticks: [["202207", 1449], ["10", 1534], ["202301", 1594], ["04", 1678], ["07", 1755], ["10", 1834]],
};

const BigHeader = () => (
  <PanelHead>
    <NameSeg suffix="<日线>" w={180} />
    <TimeSeg />
    <Seg $w={29}>最新<MonoTxt $c={G}>:</MonoTxt></Seg>
    <Seg $w={55}><MonoTxt $c={G}>3017.925</MonoTxt></Seg>
    <Seg $w={44}><MonoTxt $c={G}>-0.76%</MonoTxt></Seg>
    <Seg $w={30}>今开<MonoTxt $c={G}>:</MonoTxt></Seg>
    <Seg $w={56}><MonoTxt $c={G}>3038.186</MonoTxt></Seg>
    <Seg $w={30}>最高<MonoTxt $c={G}>:</MonoTxt></Seg>
    <Seg $w={56}><MonoTxt $c={G}>3038.358</MonoTxt></Seg>
    <Seg $w={30}>最低<MonoTxt $c={G}>:</MonoTxt></Seg>
    <Seg $w={55}><MonoTxt $c={G}>3015.008</MonoTxt></Seg>
    <Seg $w={35}>昨收<MonoTxt>:</MonoTxt></Seg>
    <Seg $w={165}><MonoTxt>3040.972</MonoTxt></Seg>
    <PeriodLink>周期</PeriodLink>
  </PanelHead>
);

const BigPanel = () => (
  <Panel $span={2}>
    <BigHeader />
    <MainPane $h={312}>
      <Layer viewBox="20 491 947 312" preserveAspectRatio="none">
        <Grid ys={[525, 580, 635, 690, 745]} x={20} w={947} />
        <Candles data={cB} />
        <Lines data={lB} />
        <g shapeRendering="crispEdges">
          <line x1={20} x2={967} y1={659.5} y2={659.5} stroke="#c8c8c8" />
          <line x1={20} x2={967} y1={689.5} y2={689.5} stroke="#c8c8c8" />
          <rect x={20.5} y={643.5} width={60} height={16} fill="#000" stroke="#c8c8c8" />
          <rect x={20.5} y={673.5} width={60} height={16} fill="#000" stroke="#c8c8c8" />
        </g>
        <BoxText x={24} y={656}>3155.256</BoxText>
        <BoxText x={24} y={686}>3100.842</BoxText>
        <Marker m={{ text: "3418.953", y: 514, tx: 90, ax1: 77, ax2: 89, head: "l" }} />
        <Marker m={{ text: "2923.511", y: 788, tx: 677, ax1: 733, ax2: 745, head: "r" }} />
      </Layer>
      <MaLegend v={["3046.459", "3053.481", "3046.185", "3074.857", "3141.296"]} />
    </MainPane>
    <SubPane $h={83}>
      <Layer viewBox="21 804 946 82" preserveAspectRatio="none">
        <Grid ys={[841]} x={20} w={947} />
        <VolBars data={vB} candles={cB} base={883} />
        <Lines data={volB} />
      </Layer>
      <VolLegend v={["200095346.0000", "276853082.0000", "280960310.1000"]} />
    </SubPane>
    <SubPane $h={126}>
      <Layer viewBox="21 887 946 125" preserveAspectRatio="none">
        <Grid ys={[942]} x={20} w={947} />
        <Hist data={hB} candles={cB} zero={942} />
        <Lines data={mB} />
      </Layer>
      <MacdLegend v={["-2.5444", "-2.3445", "-0.3997"]} />
    </SubPane>
    <AxisRow>
      {([["202304", 21], ["06", 173], ["07", 293], ["08", 419], ["09", 557], ["11", 765]] as [string, number][]).map(([t, x]) => (
        <AxisTick key={t} $x={x - 20}>{t}</AxisTick>
      ))}
    </AxisRow>
  </Panel>
);

const TallPanel = () => (
  <Panel>
    <StdHeader suffix="<10天>" />
    <MainPane $h={312}>
      <Layer viewBox="971 491 471 312" preserveAspectRatio="none">
        <Grid ys={[556, 618, 681, 744]} x={971} w={471} />
        <Candles data={c5} />
        <Lines data={l5} />
        <Marker m={{ text: "3731.687", y: 514, tx: 1017, ax1: 1005, ax2: 1016, head: "l" }} />
        <Marker m={{ text: "2863.650", y: 788, tx: 1113, ax1: 1167, ax2: 1178, head: "r" }} />
      </Layer>
      <MaLegend v={["3038.193", "3106.183", "3199.723", "3287.582", "3193.251"]} />
    </MainPane>
    <SubPane $h={83}>
      <Layer viewBox="972 804 470 82" preserveAspectRatio="none">
        <Grid ys={[841]} x={971} w={471} />
        <VolBars data={v5} candles={c5} base={883} />
        <Lines data={vol5} />
      </Layer>
      <VolLegend v={["1939428801.0000", "2642427751.6000", "2845440000.0000"]} />
    </SubPane>
    <SubPane $h={126}>
      <Layer viewBox="972 887 470 125" preserveAspectRatio="none">
        <Grid ys={[958]} x={971} w={471} />
        <Hist data={h5} candles={c5} zero={958} />
        <Lines data={m5} />
      </Layer>
      <MacdLegend v={["-58.2130", "-36.2888", "-43.8483"]} />
    </SubPane>
    <AxisRow>
      {([["202012", 973], ["202106", 1031], ["11", 1104], ["202205", 1158], ["10", 1234], ["202304", 1285], ["09", 1369]] as [string, number][]).map(([t, x]) => (
        <AxisTick key={t} $x={x - 971}>{t}</AxisTick>
      ))}
    </AxisRow>
  </Panel>
);

const AR = "#a80000";
const TimeLayer = () => (
  <Layer viewBox="1446 491 474 538" preserveAspectRatio="none">
    <g shapeRendering="crispEdges" stroke={AR} fill="none">
      {[508, 551, 594, 637, 724, 767, 810].map((y) => <line key={y} x1={1508} x2={1867} y1={y + 0.5} y2={y + 0.5} />)}
      {[872, 907, 942, 977].map((y) => <line key={y} x1={1508} x2={1867} y1={y + 0.5} y2={y + 0.5} />)}
      <line x1={1508} x2={1867} y1={681.5} y2={681.5} strokeWidth={2} />
      {[1598, 1688, 1777, 1867].map((x) => <line key={x} x1={x + 0.5} x2={x + 0.5} y1={508} y2={1012} />)}
      {[1553, 1643, 1733, 1823].map((x) => <line key={x} x1={x + 0.5} x2={x + 0.5} y1={508} y2={1012} strokeDasharray="1 2" />)}
      <line x1={1508.5} x2={1508.5} y1={491} y2={1012} stroke="#c80000" />
      <line x1={1448} x2={1920} y1={854} y2={854} stroke="#c80000" strokeWidth={2} />
      <rect x={1448} y={854} width={60} height={158} stroke="#c80000" strokeWidth={2} />
      <line x1={1448} x2={1867} y1={1012.5} y2={1012.5} stroke="#c80000" />
    </g>
    <g shapeRendering="crispEdges">
      {flow.map((b, i) => (
        <rect key={i} x={b.x} width={1} y={b.d < 0 ? 681 + b.d : 682} height={Math.max(0.5, Math.abs(b.d))} fill={b.d < 0 ? RED : "#00d400"} />
      ))}
      {tVol.map((b, i) => <rect key={i} x={b.x} width={1} y={b.y} height={1011 - b.y} fill="#ffff00" />)}
    </g>
    <path d={tYellow} stroke="#ffff00" fill="none" strokeWidth={1} />
    <path d={tWhite} stroke="#fff" fill="none" strokeWidth={1} />
  </Layer>
);

const LEFT_MAIN: [string, string][] = [["3066.936", "#ff3c3c"], ["3060.445", "#ff3c3c"], ["3053.954", "#ff3c3c"], ["3047.463", "#ff3c3c"], ["3040.972", "#f0f0f0"], ["3034.481", "#00dc00"], ["3027.990", "#00dc00"], ["3021.499", "#00dc00"]];
const RIGHT_MAIN: [string, string][] = [["+0.85%", "#ff3c3c"], ["+0.64%", "#ff3c3c"], ["+0.43%", "#ff3c3c"], ["+0.21%", "#ff3c3c"], ["+0.00%", "#f0f0f0"], ["-0.21%", "#00dc00"], ["-0.43%", "#00dc00"], ["-0.64%", "#00dc00"]];

const TimeBodyWrap = styled.div`
  position: relative; flex: 1; display: flex; flex-direction: column;
`;
const TimeBody = () => (
  <TimeBodyWrap>
    <TimeLayer />
    <TimeSection $h={363}>
      <TimeAxis $left $pitch={43}>
        {LEFT_MAIN.map(([t, c]) => <AxisValue key={t} $c={c}>{t}</AxisValue>)}
      </TimeAxis>
      <PlotTitle $c="#eeeeee">分时走势</PlotTitle>
      <TimeAxis $pitch={43}>
        {RIGHT_MAIN.map(([t, c]) => <AxisValue key={t} $c={c}>{t}</AxisValue>)}
      </TimeAxis>
    </TimeSection>
    <TimeSection $h={158}>
      <TimeAxis $left $pitch={35}>
        {["10993478", "8245109", "5496739", "2748370"].map((t) => <AxisValue key={t} $c="#e6f020">{t}</AxisValue>)}
      </TimeAxis>
      <PlotTitle $c="#ffff00">成交量</PlotTitle>
      <TimeAxis $pitch={35}>
        {["+100%", "+75%", "+50%", "+25%"].map((t) => <AxisValue key={t} $c="#e6f020">{t}</AxisValue>)}
      </TimeAxis>
    </TimeSection>
    <TimeTicks>
      {([["09:30", 1493], ["10:00", 1538], ["10:30", 1583], ["11:00", 1628], ["11:30", 1673], ["13:30", 1717], ["14:00", 1762], ["14:30", 1807]] as [string, number][]).map(([t, x]) => (
        <AxisTick key={t} $x={x - 1446}>{t}</AxisTick>
      ))}
    </TimeTicks>
  </TimeBodyWrap>
);

const TimeShare = () => (
  <Panel>
    <PanelHead>
      <NameSeg suffix="" w={108} />
      <TimeSeg />
      <Seg $w={30}>最新<MonoTxt $c={G}>:</MonoTxt></Seg>
      <Seg $w={54}><MonoTxt $c={G}>3017.925</MonoTxt></Seg>
      <Seg $w={44}><MonoTxt $c={G}>-0.76%</MonoTxt></Seg>
      <Seg $w={30}>今开<MonoTxt $c={G}>:</MonoTxt></Seg>
      <Seg $w={56}><MonoTxt $c={G}>3038.186</MonoTxt></Seg>
      <Seg $w={30}>最高</Seg>
      <HeaderButtons />
    </PanelHead>
    <TimeBody />
  </Panel>
);

/* ---------- toolbar icons ---------- */
const Ico = ({ children }: { children: React.ReactNode }) => (
  <svg width="18" height="18" viewBox="0 0 18 18">{children}</svg>
);
const Back = () => <Ico><defs><linearGradient id="ba" x1="0" y1="0" x2="0" y2="1"><stop offset="0" stopColor="#ffe070" /><stop offset="1" stopColor="#f0a010" /></linearGradient></defs><path d="M1 9l8-7v4h7v6H9v4z" fill="url(#ba)" stroke="#d89018" strokeWidth=".6" /></Ico>;
const Home = () => <Ico><path d="M9 1L1 8.500l1.500 1L9 4l6.500 5.500 1.500-1z" fill="#c8221c" /><path d="M3.500 9L9 4.500 14.500 9v7h-11z" fill="#f4ece0" stroke="#a04030" strokeWidth=".5" /><rect x="7" y="10" width="4" height="6" fill="#a03020" /></Ico>;
const Book = () => <Ico><rect x="3" y="1.500" width="13" height="15" rx="1" fill="#d89a4a" stroke="#a06a28" strokeWidth=".6" /><rect x="3" y="1.500" width="3" height="15" fill="#b87a30" /><path d="M8 5h6M8 8h6M8 11h6" stroke="#f2d8a0" /></Ico>;
const FileI = () => <Ico><path d="M2 5l3-3h2l2 2h4l2-2h1v3" fill="none" stroke="#e04010" /><rect x="1" y="5" width="16" height="11" rx="1.500" fill="#e85a1c" /><text x="9" y="14" textAnchor="middle" fontSize="9" fontWeight="700" fill="#fff" fontFamily="Liberation Sans">FIU</text></Ico>;
const Refresh = () => <Ico><path d="M3 8a6 6 0 0 1 10.500-3" fill="none" stroke="#5aa02c" strokeWidth="2.600" /><path d="M15 1v5.500h-5.500z" fill="#5aa02c" /><path d="M15 10a6 6 0 0 1-10.500 3" fill="none" stroke="#7cc040" strokeWidth="2.600" /><path d="M3 17v-5.500h5.500z" fill="#7cc040" /></Ico>;
const Zoom = ({ plus }: { plus?: boolean }) => <Ico><path d="M7 11l-5 5" stroke="#f0a020" strokeWidth="3" strokeLinecap="round" /><circle cx="11" cy="7" r="5" fill="#fff" stroke="#e03020" strokeWidth="1.800" /><path d={plus ? "M8.500 7h5M11 4.500v5" : "M8.500 7h5"} stroke="#e03020" strokeWidth="1.600" /></Ico>;
const Squares = () => <Ico><rect x="2" y="2" width="10" height="10" rx="1" fill="#e04030" /><rect x="6.500" y="6.500" width="10" height="10" rx="1" fill="#68a858" stroke="#f4f4f4" strokeWidth=".6" /></Ico>;
const Pencil = () => <Ico><path d="M4 12L13 2l3 2.500L7 14.500 3.500 15z" fill="#ee5a28" stroke="#b83010" strokeWidth=".5" /><path d="M1 17h15" stroke="#d81818" strokeWidth="1.500" /></Ico>;
const Bell = () => <Ico><path d="M7 1c1 4 4 7 9 12 1 2-3 4-8 4s-7-2-5-5C4 9 5 5 7 1z" fill="#d88a28" stroke="#6a3a10" strokeWidth=".7" /><ellipse cx="9" cy="14" rx="4" ry="2.400" fill="#8a4a18" /></Ico>;
const Funnel = () => <Ico><path d="M1 3h16L10.500 10v7h-3v-7z" fill="#b8b8b8" stroke="#777" strokeWidth=".5" /><path d="M3.500 4h11L10 8.500H8z" fill="#e03030" /></Ico>;
const NewI = () => <Ico><text x="7" y="15" textAnchor="middle" fontSize="12" fill="#3a7ae0" fontFamily="Noto Sans CJK SC">新</text><circle cx="14.500" cy="4" r="2.600" fill="#e81818" /></Ico>;
const TableI = () => <Ico><rect x="1.500" y="1.500" width="15" height="15" rx="1" fill="#fbf5d8" stroke="#222" /><path d="M2 5h14" stroke="#222" strokeWidth="2" /><path d="M3 8h12" stroke="#d02020" /><path d="M3 10.500h12" stroke="#20a020" /><path d="M3 13h12" stroke="#2050d0" /><path d="M9 5v10" stroke="#555" strokeWidth=".5" /></Ico>;
const ChartI = () => <Ico><path d="M1 10l5-4 3 2 7-7" fill="none" stroke="#e01818" strokeWidth="1.800" /><rect x="2" y="12" width="3" height="5" fill="#d8c020" /><rect x="7" y="10" width="3" height="7" fill="#40a040" /><rect x="12" y="8" width="3" height="9" fill="#e8a020" /></Ico>;
const TickI = () => <Ico><rect x="1" y="1" width="16" height="16" rx="2.500" fill="#e8603a" /><text x="9" y="13" textAnchor="middle" fontSize="9" fill="#fff" fontFamily="Liberation Sans" textLength="14" lengthAdjust="spacingAndGlyphs">Tick</text></Ico>;
const DrawI = () => <Ico><rect x="1" y="1" width="16" height="16" rx="2.500" fill="#f06428" /><rect x="3" y="3" width="12" height="12" fill="#fff6ec" /><text x="9" y="13.500" textAnchor="middle" fontSize="11" fill="#e03010" fontFamily="Noto Sans CJK SC">画</text></Ico>;

const ICONS = [<Back />, <Home />, <Book />, <FileI />, <Refresh />, <Zoom plus />, <Zoom />, <Squares />, <Pencil />, <Bell />, <Funnel />, <NewI />];
const PERIODS: [string, boolean, boolean?][] = [["日", true], ["周", true], ["月", true], ["季", true], ["X", true], ["1", false], ["3", false], ["5", false], ["15", false], ["30", false], ["60", false, true], ["2hr", false], ["4hr", false], ["Y", false]];

const TABS: [string, number][] = [["国内期货", 82], ["股指期货", 82], ["新闻资讯", 82], ["热点排名", 82], ["期权报价", 81], ["期权策略", 82]];

export default function App() {
  return (
    <Screen>
      <Global />
      <MenuBar>
        {["系统", "页面", "分析", "新闻"].map((m) => <MenuItem key={m}>{m}</MenuItem>)}
        <MenuItem $hot>特色功能</MenuItem>
        {["徽商专栏", "交易", "工具", "帮助"].map((m) => <MenuItem key={m}>{m}</MenuItem>)}
        <BrandTitle>博易云-徽商期货</BrandTitle>
        <RightCluster>
          <TopBtn>
            <svg width="12" height="18" viewBox="0 0 12 18"><path d="M8 0L1 10h4L3 18l8-11H7z" fill="#f0a020" /></svg>
            交易
          </TopBtn>
          <TopBtn>
            <svg width="18" height="15" viewBox="0 0 18 15"><ellipse cx="9" cy="6.500" rx="8.500" ry="6" fill="#8c8c8c" /><path d="M4 10l-1 5 6-3z" fill="#8c8c8c" /><circle cx="5.500" cy="6.500" r="1" fill="#eee" /><circle cx="9" cy="6.500" r="1" fill="#eee" /><circle cx="12.500" cy="6.500" r="1" fill="#eee" /></svg>
            论坛
          </TopBtn>
          <WinBtn><svg width="14" height="12" viewBox="0 0 14 12"><rect x="1.500" y="7.500" width="11" height="3" fill="#f4f4f4" stroke="#9a9a9a" /></svg></WinBtn>
          <WinBtn><svg width="14" height="12" viewBox="0 0 14 12" fill="none"><rect x="2.500" y="1.500" width="9" height="9" stroke="#9a9a9a" strokeWidth="1.500" /><rect x="4.500" y="3.500" width="5" height="5" stroke="#eee" /></svg></WinBtn>
          <WinBtn><svg width="14" height="12" viewBox="0 0 14 12"><path d="M2 1l10 10M12 1L2 11" stroke="#8f8f8f" strokeWidth="3" /><path d="M2 1l10 10M12 1L2 11" stroke="#f4f4f4" strokeWidth="1.200" /></svg></WinBtn>
        </RightCluster>
      </MenuBar>

      <ToolBar>
        {ICONS.map((ic, i) => <ToolSlot key={i}>{ic}</ToolSlot>)}
        <ToolSep />
        <ToolSlot><TableI /></ToolSlot>
        <ToolSlot><ChartI /></ToolSlot>
        <ToolSlot><TickI /></ToolSlot>
        {PERIODS.map(([t, gold, sel]) => (
          <ToolSlot key={t} $sel={sel}><PeriodBtn $gold={gold}>{t}</PeriodBtn></ToolSlot>
        ))}
        <ToolSep />
        <ToolSlot><DrawI /></ToolSlot>
      </ToolBar>

      <Workspace>
        <SideTabs>
          <SideTab $h={81} $sel>
            <TabText>截图</TabText>
            <svg width="8" height="10" viewBox="0 0 8 10"><path d="M1 1l6 4-6 4z" fill="#fff" /></svg>
          </SideTab>
          {TABS.map(([t, h]) => (
            <SideTab key={t} $h={h}><TabText>{t}</TabText></SideTab>
          ))}
        </SideTabs>
        <ChartGrid>
          <SmallPanel s={P1} />
          <SmallPanel s={P2} />
          <SmallPanel s={P3} />
          <SmallPanel s={P4} />
          <BigPanel />
          <TallPanel />
          <TimeShare />
        </ChartGrid>
      </Workspace>

      <StatusBar>
        <StatusCjk $w={28}>沪</StatusCjk>
        <StatusCell $w={70} $c="#008000">3017.93</StatusCell>
        <StatusCell $w={50} $c="#008000">-23.05</StatusCell>
        <StatusCell $w={70} $c="#444">2207.10亿</StatusCell>
        <StatusSep $w={10} />
        <StatusCjk $w={28}>深</StatusCjk>
        <StatusCell $w={70} $c="#008000">9742.87</StatusCell>
        <StatusCell $w={50} $c="#008000">-96.65</StatusCell>
        <StatusCell $w={70} $c="#444">3070.66亿</StatusCell>
        <StatusSep $w={9} />
        <StatusCell $w={29} $c="#333">300</StatusCell>
        <StatusCell $w={69} $c="#008000">3495.65</StatusCell>
        <StatusCell $w={57} $c="#008000">-42.36</StatusCell>
        <StatusCell $w={80} $c="#444">960.94亿</StatusCell>
      </StatusBar>
      <TaskSliver />
      <DateTip>2023年11月27日<br />星期一</DateTip>
    </Screen>
  );
}
